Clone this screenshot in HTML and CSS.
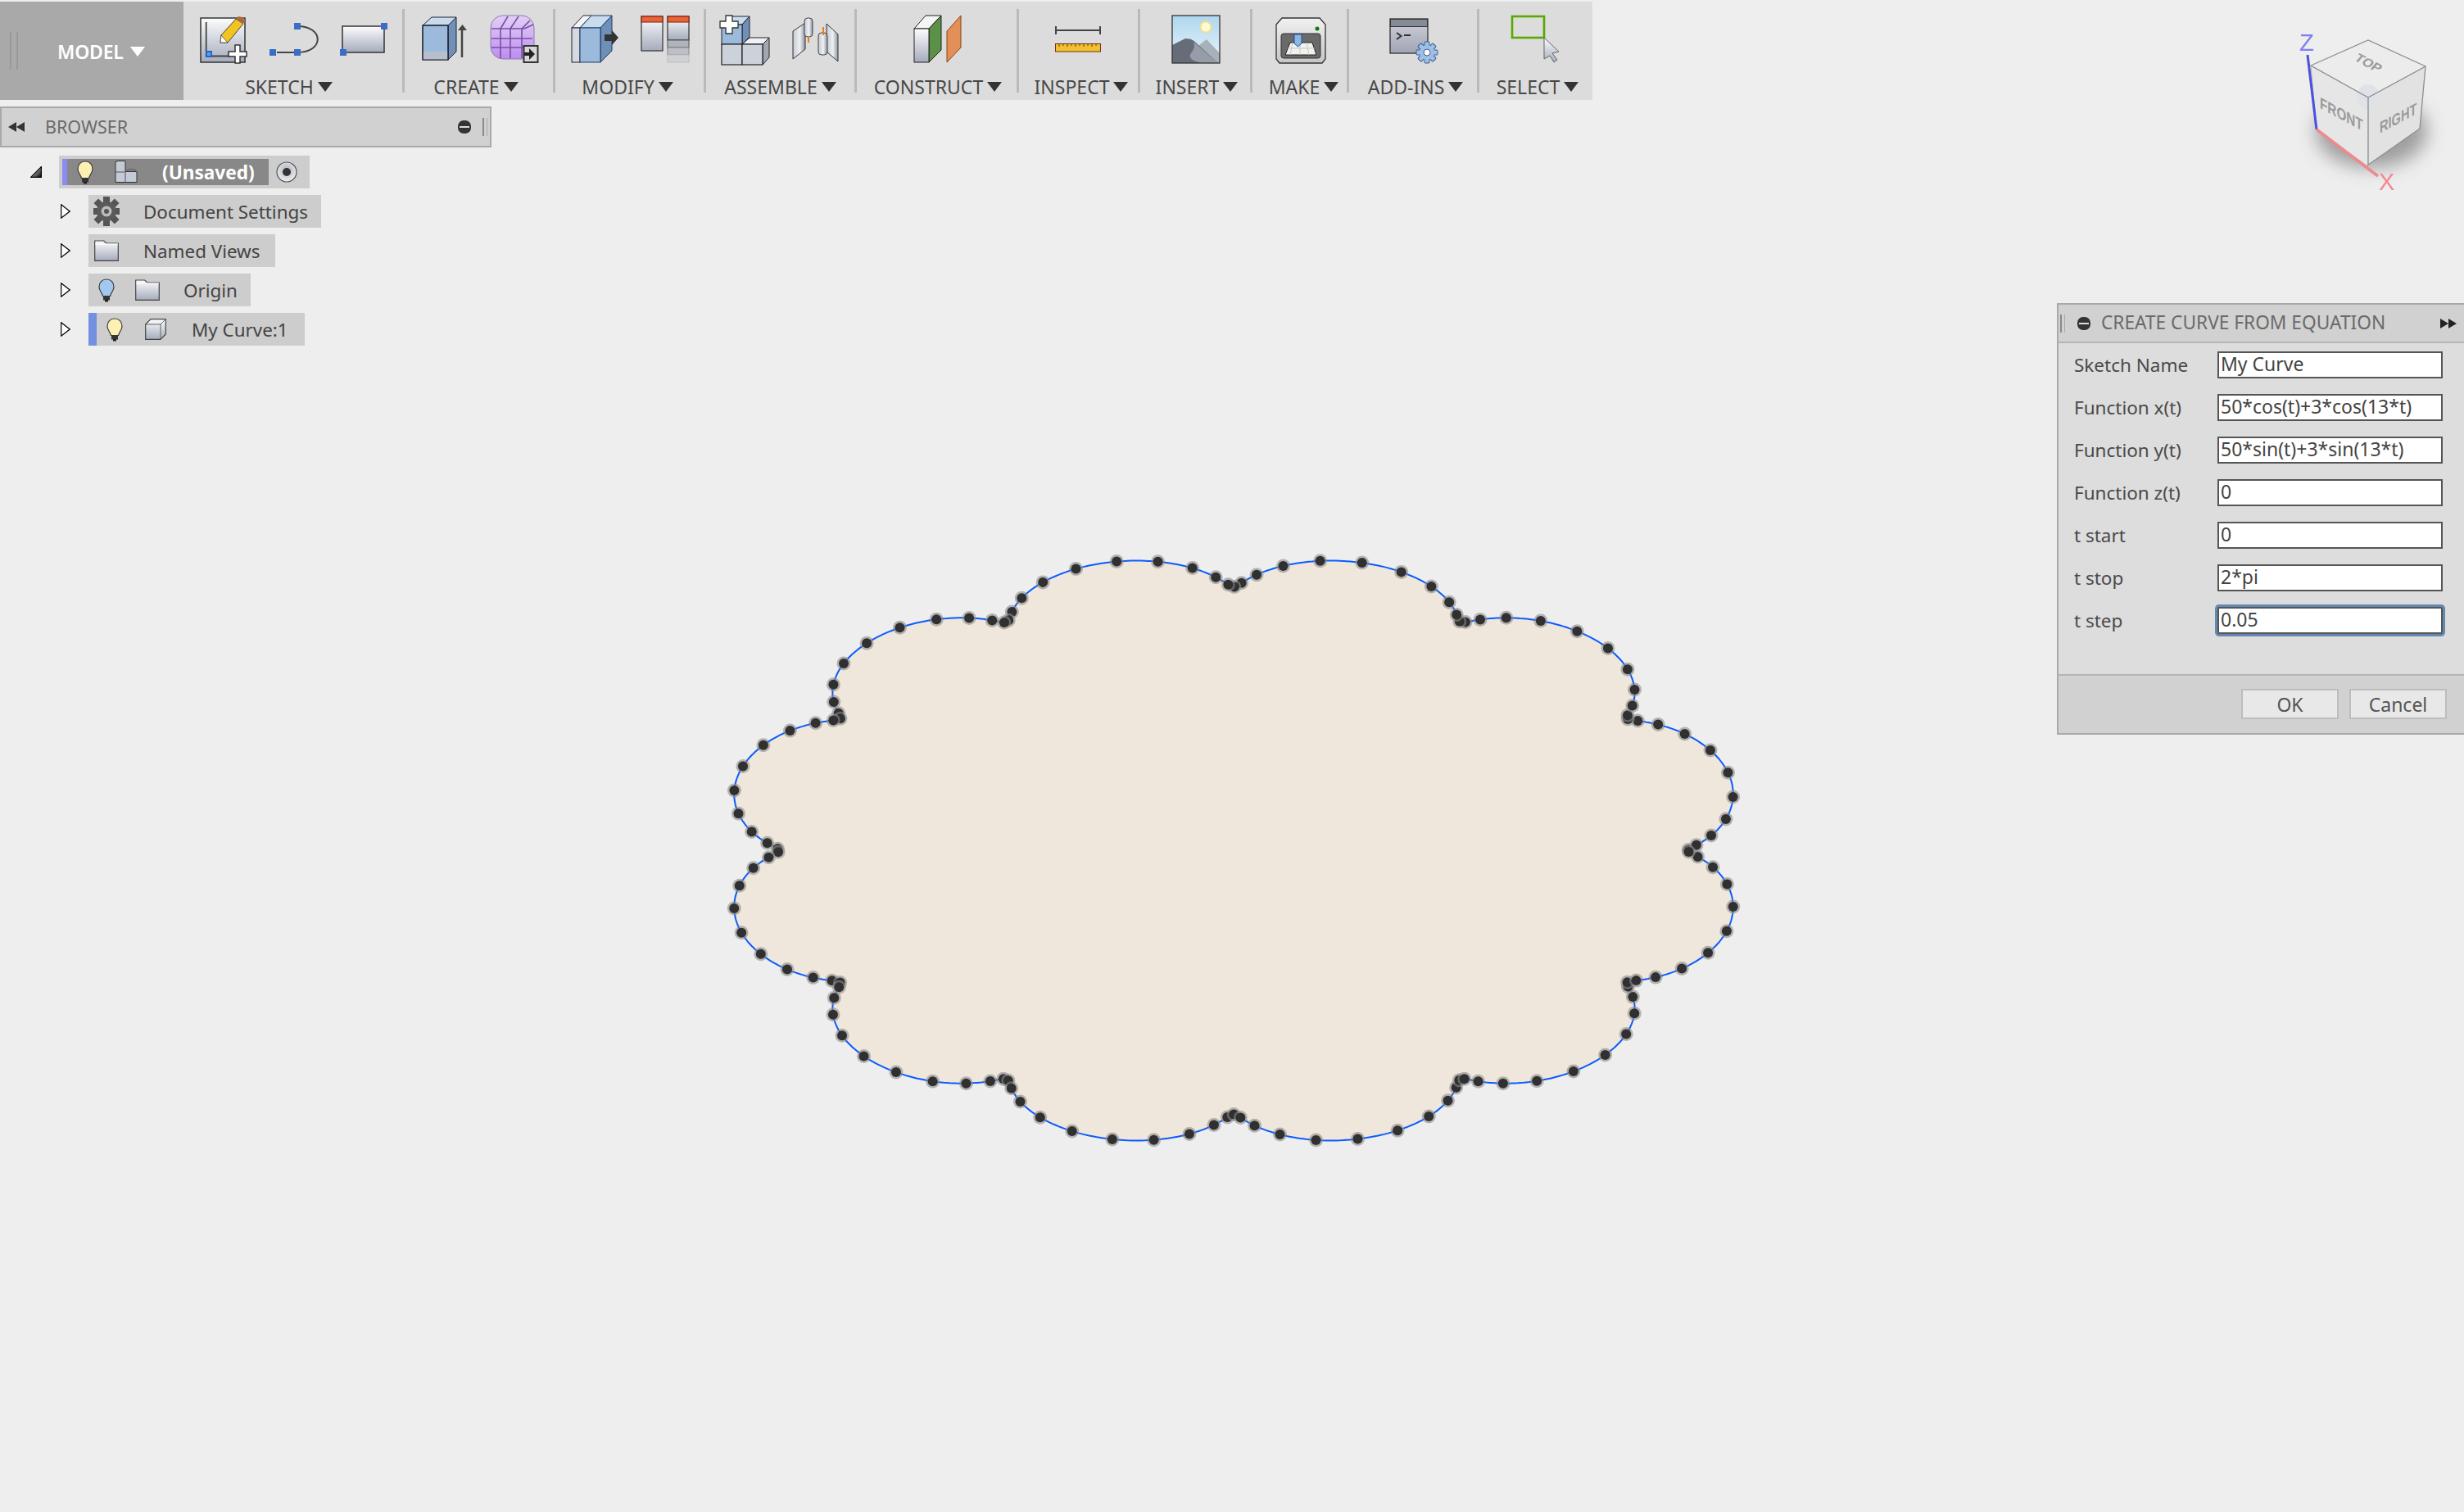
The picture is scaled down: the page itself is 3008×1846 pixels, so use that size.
FILE: index.html
```html
<!DOCTYPE html>
<html lang="en">
<head>
<meta charset="utf-8">
<title>Create Curve From Equation</title>
<link rel="stylesheet" href="styles.css">
</head>
<body>
<svg class="defs" width="0" height="0" aria-hidden="true">
  <defs>
    <linearGradient id="steel" x1="0" y1="0" x2="0" y2="1"><stop offset="0" stop-color="#fdfdfe"/><stop offset="1" stop-color="#a4abbc"/></linearGradient>
    <linearGradient id="steelH" x1="0" y1="0" x2="1" y2="0"><stop offset="0" stop-color="#c4c9d2"/><stop offset=".55" stop-color="#eef0f3"/><stop offset="1" stop-color="#8e95a4"/></linearGradient>
    <linearGradient id="purple" x1="0" y1="0" x2="0" y2="1"><stop offset="0" stop-color="#e2cff6"/><stop offset="1" stop-color="#bd8df0"/></linearGradient>
    <linearGradient id="sky" x1="0" y1="0" x2="0" y2="1"><stop offset="0" stop-color="#aed6ee"/><stop offset="1" stop-color="#eaf5fb"/></linearGradient>
    <linearGradient id="body3d" x1="0" y1="0" x2="0" y2="1"><stop offset="0" stop-color="#f1f1f1"/><stop offset="1" stop-color="#c6c6c6"/></linearGradient>
    <linearGradient id="term" x1="0" y1="0" x2="0" y2="1"><stop offset="0" stop-color="#cfd2dc"/><stop offset="1" stop-color="#a0a4b4"/></linearGradient>
    <linearGradient id="twist" x1="0" y1="0" x2="1" y2="1"><stop offset="0" stop-color="#fff"/><stop offset="1" stop-color="#000"/></linearGradient>
    <radialGradient id="radio" cx=".5" cy=".4" r=".6"><stop offset="0" stop-color="#aeb2bd"/><stop offset="1" stop-color="#eef0f4"/></radialGradient>
    <filter id="soft" x="-50%" y="-50%" width="200%" height="200%"><feGaussianBlur stdDeviation="11"/></filter>
    <symbol id="bulb" viewBox="0 0 20 29">
      <path d="M10 1C4.500 1 1 5 1 10.500c0 4.500 3.500 6.500 4.500 11h9c1-4.500 4.500-6.500 4.500-11C19 5 15.500 1 10 1z" fill="currentColor" stroke="#3a3a3a" stroke-width="1.200"/>
      <rect x="6" y="21.500" width="8" height="5" fill="#333"/><rect x="8" y="26" width="4" height="2.500" fill="#222"/>
    </symbol>
    <symbol id="folder" viewBox="0 0 30 26">
      <path d="M.7 25.300V1h11l3 3h14.600v21.300z" fill="url(#steel)" stroke="#444" stroke-width="1.200"/>
      <path d="M1 5h28" stroke="#fff" stroke-width="1"/>
    </symbol>
  </defs>
</svg>

<svg class="canvas" id="canvas" viewBox="0 0 3008 1846" aria-hidden="true"></svg>

<header class="toolbar">
  <div class="model">
    <span class="grip"></span>
    <span class="model-label">MODEL<i class="caret caret-light"></i></span>
  </div>

  <section class="group group-sketch">
    <svg class="icons" width="267" height="85" viewBox="224 5 267 85">
      <rect x="245" y="22" width="54" height="54" fill="url(#steel)" stroke="#333" stroke-width="1.500"/>
      <path d="M251.700 27v41.500H281" fill="none" stroke="#444" stroke-width="1.800"/>
      <rect x="251" y="62" width="8" height="8" fill="#2e63bd"/><rect x="253" y="64" width="4" height="4" fill="#4fa3ff"/>
      <path d="M270 43l18-20 9 6-19 23h-9z" fill="#f3c320" stroke="#444" stroke-width="1"/>
      <path d="M270 43l8 9h-9z" fill="#fff" stroke="#444" stroke-width=".8"/>
      <path d="M288 23l3-3 5 1 3 5-2 3z" fill="#a9693a"/>
      <path d="M287 55h6v8h8v6h-8v8h-6v-8h-8v-6h8z" fill="#fff" stroke="#333" stroke-width="1.500"/>

      <path d="M338 64h25c33 0 33-32 0-32" fill="none" stroke="#444" stroke-width="2"/>
      <rect x="329" y="60" width="8" height="8" fill="#3a6cc8"/><rect x="359" y="60" width="8" height="8" fill="#3a6cc8"/><rect x="359" y="28" width="8" height="8" fill="#3a6cc8"/>

      <rect x="418" y="32" width="51" height="32" fill="url(#steel)" stroke="#333" stroke-width="1.500"/>
      <rect x="465" y="28" width="8" height="8" fill="#3a6cc8"/><rect x="415" y="60" width="8" height="8" fill="#3a6cc8"/>
    </svg>
    <div class="tool-label">SKETCH<i class="caret"></i></div>
  </section>
  <span class="sep"></span>

  <section class="group group-create">
    <svg class="icons" width="181" height="85" viewBox="494 5 181 85">
      <path d="M516 31l11-10h30l-10 10z" fill="#c8dcee" stroke="#223" stroke-width="1"/>
      <path d="M547 31l10-10v42l-10 10z" fill="#7090b8" stroke="#223" stroke-width="1"/>
      <rect x="516" y="31" width="31" height="42" fill="#9cbadb" stroke="#223" stroke-width="1"/>
      <path d="M516.500 63h30v10h-30z" fill="#b8bfcc"/>
      <path d="M516 73V31h31v42z" fill="none" stroke="#223" stroke-width="1.200"/>
      <path d="M564 70V36" stroke="#444" stroke-width="2.500"/><path d="M559 37l5.500-7 5.500 7z" fill="#444"/>

      <rect x="599" y="19" width="53" height="53" rx="15" fill="url(#purple)" stroke="#8f7ab0" stroke-width="1"/>
      <path d="M600 35h40l11-5M600 47h50M600 58h50M611 35v36M623 35v36M637 35v36M611 35l9-15M623 35l10-15M637 35l10-10" fill="none" stroke="#7a4fa3" stroke-width="1.600"/>
      <rect x="639.500" y="56" width="17" height="20" fill="#d8d8d8" stroke="#333" stroke-width="2"/>
      <path d="M640 64h6v-5l7 7-7 7v-5h-6z" fill="#222"/>
    </svg>
    <div class="tool-label">CREATE<i class="caret"></i></div>
  </section>
  <span class="sep"></span>

  <section class="group group-modify">
    <svg class="icons" width="181" height="85" viewBox="678 5 181 85">
      <path d="M698 34l14-15h10l-14 15z" fill="#f4f5f7" stroke="#223" stroke-width="1"/>
      <rect x="698" y="34" width="10" height="42" fill="#d5d9e0" stroke="#223" stroke-width="1"/>
      <path d="M708 34l14-15h25l-14 15z" fill="#c8dcee" stroke="#1e3a66" stroke-width="1"/>
      <path d="M733 34l14-15v43l-14 14z" fill="#6e8fb8" stroke="#1e3a66" stroke-width="1"/>
      <rect x="708" y="34" width="25" height="42" fill="#9cbadb" stroke="#1e3a66" stroke-width="1"/>
      <path d="M738 42h9v-5l8 9-8 9v-5h-9z" fill="#333"/>

      <rect x="783" y="20" width="26" height="42" fill="url(#steel)" stroke="#333" stroke-width="1.200"/>
      <rect x="783" y="20" width="26" height="7" fill="#ea6236" stroke="#7a1f10" stroke-width="1"/>
      <rect x="815" y="20" width="26" height="29" fill="url(#steel)" stroke="#333" stroke-width="1.200"/>
      <rect x="815" y="20" width="26" height="7" fill="#ea6236" stroke="#7a1f10" stroke-width="1"/>
      <rect x="815" y="49" width="26" height="9" fill="#b0b4bc" stroke="#555" stroke-width="1"/>
      <rect x="815" y="58" width="26" height="9" fill="#bcbfc6" stroke="#888" stroke-width="1"/>
      <rect x="815" y="67" width="26" height="9" fill="#d0d1d4" stroke="#bbb" stroke-width="1"/>
    </svg>
    <div class="tool-label">MODIFY<i class="caret"></i></div>
  </section>
  <span class="sep"></span>

  <section class="group group-assemble">
    <svg class="icons" width="181" height="85" viewBox="862 5 181 85">
      <path d="M890 20h25l-9 10h-25z" fill="#c8dcee" stroke="#223" stroke-width="1"/>
      <path d="M906 30l9-10v25l-9 9z" fill="#7090b8" stroke="#223" stroke-width="1"/>
      <rect x="881" y="30" width="25" height="24" fill="#9cbadb" stroke="#223" stroke-width="1"/>
      <rect x="881" y="54" width="25" height="25" fill="#ccd2da" stroke="#222" stroke-width="1.200"/>
      <path d="M906 54l9-8h24l-8 8z" fill="#f0f1f4" stroke="#222" stroke-width="1"/>
      <path d="M931 54l8-8v24l-8 9z" fill="#a0a8b4" stroke="#222" stroke-width="1"/>
      <rect x="906" y="54" width="25" height="25" fill="#ccd2da" stroke="#222" stroke-width="1.200"/>
      <path d="M886 19h8v7h7v8h-7v7h-8v-7h-7v-8h7z" fill="#fff" stroke="#333" stroke-width="1.300"/>

      <path d="M968 38l15-10v32l-15 12z" fill="url(#steelH)" stroke="#333" stroke-width="1"/>
      <rect x="982" y="22" width="10" height="23" rx="4" fill="url(#steelH)" stroke="#444" stroke-width="1"/>
      <path d="M987 45v7" stroke="#f07a10" stroke-width="2"/>
      <path d="M1009 29l14 13v33l-14-12z" fill="url(#steelH)" stroke="#333" stroke-width="1"/>
      <rect x="999" y="40" width="11" height="27" rx="4" fill="url(#steelH)" stroke="#444" stroke-width="1"/>
      <path d="M1005 33v10" stroke="#f07a10" stroke-width="2"/>
    </svg>
    <div class="tool-label">ASSEMBLE<i class="caret"></i></div>
  </section>
  <span class="sep"></span>

  <section class="group group-construct">
    <svg class="icons" width="195" height="85" viewBox="1046 5 195 85">
      <path d="M1116 35l14-16h19l-15 16z" fill="#f4f5f7" stroke="#222" stroke-width="1"/>
      <path d="M1134 35l15-16v42l-15 15z" fill="#5a9048" stroke="#222" stroke-width="1"/>
      <rect x="1116" y="35" width="18" height="41" fill="url(#steel)" stroke="#222" stroke-width="1"/>
      <path d="M1156 38l17-19v39l-17 18z" fill="#e29058" stroke="#8a4010" stroke-width="1"/>
    </svg>
    <div class="tool-label">CONSTRUCT<i class="caret"></i></div>
  </section>
  <span class="sep"></span>

  <section class="group group-inspect">
    <svg class="icons" width="145" height="85" viewBox="1244 5 145 85">
      <path d="M1289 37h54M1289 32v10M1343 32v10" stroke="#444" stroke-width="2" fill="none"/>
      <rect x="1288.500" y="53.500" width="55" height="9.500" fill="#f0c030" stroke="#7a3010" stroke-width="1"/>
      <path d="M1293 54v3M1298 54v2M1303 54v3M1308 54v2M1313 54v3M1318 54v2M1323 54v3M1328 54v2M1333 54v3M1338 54v2" stroke="#7a3010" stroke-width="1"/>
    </svg>
    <div class="tool-label">INSPECT<i class="caret"></i></div>
  </section>
  <span class="sep"></span>

  <section class="group group-insert">
    <svg class="icons" width="134" height="85" viewBox="1392 5 134 85">
      <rect x="1431" y="19" width="58" height="58" fill="url(#sky)"/>
      <circle cx="1472" cy="33" r="6.500" fill="#fffbd8" stroke="#efe08e" stroke-width="2"/>
      <path d="M1464 55l9-7 16 17v12h-16z" fill="#a8b0ba"/>
      <path d="M1431 55l16-8c8 0 11 3 14 6l26 24h-56z" fill="#666c78"/>
      <path d="M1457 51l30 26h-20c-6-2-12-3-14-7-2-6 8-8 4-19z" fill="#969ca8"/>
      <rect x="1431" y="19" width="58" height="58" fill="none" stroke="#333" stroke-width="1.300"/>
    </svg>
    <div class="tool-label">INSERT<i class="caret"></i></div>
  </section>
  <span class="sep"></span>

  <section class="group group-make">
    <svg class="icons" width="115" height="85" viewBox="1529 5 115 85">
      <path d="M1565 22h46l7 8v42l-4 5h-52l-4-5V30z" fill="url(#body3d)" stroke="#333" stroke-width="1.300"/>
      <circle cx="1608" cy="35" r="2.500" fill="#0a7a10"/>
      <rect x="1564" y="41" width="48" height="30" rx="3" fill="#6a6a6a" stroke="#333" stroke-width="1"/>
      <path d="M1575 52h27l5 15h-38z" fill="#f1f1ee" stroke="#222" stroke-width="1"/>
      <path d="M1572 59h33M1578 52l-3 15M1587 52v15M1595 52l3 15" stroke="#c8c8c8" stroke-width="1"/>
      <path d="M1580 42h9v11l-4.500 4-4.500-4z" fill="#8ab8e0" stroke="#1a50a0" stroke-width="1"/>
    </svg>
    <div class="tool-label">MAKE<i class="caret"></i></div>
  </section>
  <span class="sep"></span>

  <section class="group group-addins">
    <svg class="icons" width="156" height="85" viewBox="1647 5 156 85">
      <rect x="1697" y="23" width="46" height="42" fill="url(#term)" stroke="#333" stroke-width="1.300"/>
      <rect x="1697.500" y="23.500" width="45" height="9" fill="#868b98" stroke="#333" stroke-width="1"/>
      <path d="M1705 40l5.500 4-5.500 4M1714 43h8" fill="none" stroke="#333" stroke-width="2"/>
      <g fill="#9fc0e6" stroke="#3a5a90" stroke-width="1">
        <rect x="1739" y="51" width="6" height="26" rx="1"/>
        <rect x="1729" y="61" width="26" height="6" rx="1"/>
        <rect x="1739" y="51" width="6" height="26" rx="1" transform="rotate(45 1742 64)"/>
        <rect x="1739" y="51" width="6" height="26" rx="1" transform="rotate(-45 1742 64)"/>
      </g>
      <circle cx="1742" cy="64" r="9" fill="#9fc0e6"/>
      <circle cx="1742" cy="64" r="4" fill="#fff" stroke="#3a5a90" stroke-width="1"/>
    </svg>
    <div class="tool-label">ADD-INS<i class="caret"></i></div>
  </section>
  <span class="sep"></span>

  <section class="group group-select">
    <svg class="icons" width="138" height="85" viewBox="1806 5 138 85">
      <rect x="1846" y="20" width="39" height="26" fill="none" stroke="#5aa800" stroke-width="2.600"/>
      <path d="M1885 46l18 17-8 2 6 8-4 3-5-8-7 4z" fill="url(#steel)" stroke="#666" stroke-width="1"/>
    </svg>
    <div class="tool-label">SELECT<i class="caret"></i></div>
  </section>
</header>

<aside class="browser">
  <div class="browser-head">
    <svg class="head-arrows" width="20" height="14" viewBox="0 0 20 14"><path d="M10 1L0 7l10 6zM20 1L10 7l10 6z" fill="#333"/></svg>
    <span class="browser-title">BROWSER</span>
    <span class="pill"></span>
    <span class="mini-grip"></span>
  </div>

  <ul class="tree">
    <li class="row row-root">
      <svg class="toggle-open" width="14" height="14" viewBox="0 0 14 14"><path d="M13.400.6v12.800H.6z" fill="url(#twist)" stroke="#000" stroke-width="1.200"/></svg>
      <div class="item item-root">
        <div class="root-inner">
          <i class="bar bar-violet"></i>
          <svg class="bulb bulb-yellow bulb-root"><use href="#bulb"/></svg>
          <svg class="comp" width="28" height="28" viewBox="0 0 28 28">
            <path d="M1 1.500l3-1h9v13h14v13H1z" fill="#c4cad6" stroke="#333" stroke-width="1"/>
            <path d="M1 14h12M13 14v13M13 14l3-3h9l2 3" fill="none" stroke="#555" stroke-width="1"/>
          </svg>
          <span class="root-name">(Unsaved)</span>
        </div>
        <svg class="radio" width="26" height="26" viewBox="0 0 26 26"><circle cx="13" cy="13" r="12" fill="url(#radio)" stroke="#555" stroke-width="1.200"/><circle cx="13" cy="13" r="5" fill="#333"/></svg>
      </div>
    </li>
    <li class="row">
      <svg class="toggle" width="12" height="18" viewBox="0 0 12 18"><path d="M.7.8l10.500 8.200L.7 17.200z" fill="#fff" stroke="#000" stroke-width="1.200"/></svg>
      <div class="item item-doc">
        <svg class="gear" width="32" height="36" viewBox="0 0 32 36">
          <g fill="#555"><rect x="12" y="0" width="8" height="36"/><rect x="0" y="14" width="32" height="8"/><rect x="12" y="0" width="8" height="36" transform="rotate(45 16 18)"/><rect x="12" y="0" width="8" height="36" transform="rotate(-45 16 18)"/></g>
          <circle cx="16" cy="18" r="12" fill="#5a5a5a"/><circle cx="16" cy="18" r="6.500" fill="#bbb"/><circle cx="16" cy="18" r="3" fill="#555"/>
        </svg>
        <span class="item-text">Document Settings</span>
      </div>
    </li>
    <li class="row">
      <svg class="toggle" width="12" height="18" viewBox="0 0 12 18"><path d="M.7.8l10.500 8.200L.7 17.200z" fill="#fff" stroke="#000" stroke-width="1.200"/></svg>
      <div class="item item-views">
        <svg class="folder"><use href="#folder"/></svg>
        <span class="item-text">Named Views</span>
      </div>
    </li>
    <li class="row">
      <svg class="toggle" width="12" height="18" viewBox="0 0 12 18"><path d="M.7.8l10.500 8.200L.7 17.200z" fill="#fff" stroke="#000" stroke-width="1.200"/></svg>
      <div class="item item-origin">
        <svg class="bulb bulb-blue"><use href="#bulb"/></svg>
        <svg class="folder"><use href="#folder"/></svg>
        <span class="item-text">Origin</span>
      </div>
    </li>
    <li class="row">
      <svg class="toggle" width="12" height="18" viewBox="0 0 12 18"><path d="M.7.8l10.500 8.200L.7 17.200z" fill="#fff" stroke="#000" stroke-width="1.200"/></svg>
      <div class="item item-curve">
        <i class="bar bar-blue"></i>
        <svg class="bulb bulb-yellow"><use href="#bulb"/></svg>
        <svg class="box" width="26" height="26" viewBox="0 0 26 26">
          <path d="M.7 7L7 .7h18.300V19L19 25.300H.7z" fill="url(#steel)" stroke="#444" stroke-width="1.200"/>
          <path d="M.7 7H19v18.300M19 7l6.300-6.300" fill="none" stroke="#666" stroke-width="1"/>
        </svg>
        <span class="item-text">My Curve:1</span>
      </div>
    </li>
  </ul>
</aside>

<svg class="viewcube" width="228" height="230" viewBox="2780 20 228 230">
  <ellipse cx="2895" cy="160" rx="68" ry="45" fill="#8a8a8a" opacity=".8" filter="url(#soft)"/>
  <path d="M2891 49l70 32-7 76-64 45-63-44-6-78z" fill="#ececec"/>
  <path d="M2821 80l70 39v83l-63-44z" fill="#e6e6e6"/>
  <path d="M2891 119l70-38-7 76-64 45z" fill="#e2e2e2"/>
  <ellipse cx="2891" cy="118" rx="14" ry="15" fill="#dfe2e6"/>
  <path d="M2821 80l70-31 70 32-70 38zM2891 119v83M2961 81l-7 76-64 45" fill="none" stroke="#8d8d8d" stroke-width="1.300"/>
  <path d="M2821 80l7 78" fill="none" stroke="#b5b5b5" stroke-width="1"/>
  <text class="cube-text" transform="matrix(.86 .46 -.6 .7 2873 73)">TOP</text>
  <text class="cube-text" transform="matrix(.9 .48 0 1.150 2832 132)">FRONT</text>
  <text class="cube-text" transform="matrix(.86 -.46 0 1.150 2905 163)">RIGHT</text>
  <path d="M2817 67l11 91" stroke="#4a50e0" stroke-width="3" fill="none"/>
  <path d="M2828 158l75 57" stroke="#ee8a8a" stroke-width="3.500" fill="none"/>
  <text class="axis axis-z" x="2807" y="62">Z</text>
  <text class="axis axis-x" x="2904" y="232">X</text>
</svg>

<section class="dialog">
  <div class="dialog-head">
    <span class="mini-grip mini-grip-left"></span>
    <span class="pill"></span>
    <span class="dialog-title">CREATE CURVE FROM EQUATION</span>
    <svg class="head-arrows-right" width="20" height="14" viewBox="0 0 20 14"><path d="M0 1l10 6-10 6zM10 1l10 6-10 6z" fill="#222"/></svg>
  </div>
  <div class="form">
    <span class="field-label">Sketch Name</span><div class="field">My Curve</div>
    <span class="field-label">Function x(t)</span><div class="field">50*cos(t)+3*cos(13*t)</div>
    <span class="field-label">Function y(t)</span><div class="field">50*sin(t)+3*sin(13*t)</div>
    <span class="field-label">Function z(t)</span><div class="field">0</div>
    <span class="field-label">t start</span><div class="field">0</div>
    <span class="field-label">t stop</span><div class="field">2*pi</div>
    <span class="field-label">t step</span><div class="field field-focus">0.05</div>
  </div>
  <div class="dialog-foot">
    <button class="btn" type="button">OK</button>
    <button class="btn" type="button">Cancel</button>
  </div>
</section>
<script src="curve.js"></script>
</body>
</html>
```
FILE: styles.css
```css
* { box-sizing: border-box; }
html, body { margin: 0; padding: 0; }
body {
  width: 3008px;
  height: 1846px;
  position: relative;
  overflow: hidden;
  background: #eeeeee;
  color: #444;
  font-family: "Noto Sans", "Open Sans", sans-serif;
  font-size: 23px;
}
.defs { position: absolute; }
.canvas { position: absolute; left: 0; top: 0; width: 3008px; height: 1846px; }
.viewcube { position: absolute; left: 2780px; top: 20px; }
.cube-text { font: 700 17px "Liberation Sans", sans-serif; fill: #9a9a9a; }
.axis { font: 400 29px "Liberation Sans", sans-serif; }
.axis-z { fill: #7f7ff2; }
.axis-x { fill: #f4898f; }

/* toolbar */
.toolbar {
  position: relative;
  display: flex;
  width: 1944px;
  height: 120px;
  margin-top: 2px;
  background: #dcdcdc;
}
.model {
  display: flex;
  align-items: center;
  width: 224px;
  background: #a9a9a9;
  padding-left: 12px;
}
.grip {
  width: 10px;
  height: 46px;
  border-left: 2px solid #999;
  border-right: 2px solid #999;
}
.model-label {
  display: flex;
  align-items: center;
  margin: 2px 0 0 48px;
  color: #fff;
  font-size: 23px;
  font-weight: 600;
  letter-spacing: -.2px;
}
.group { display: flex; flex-direction: column; padding-top: 3px; }
.group-sketch { width: 267px; }
.group-create, .group-modify, .group-assemble { width: 181px; }
.group-construct { width: 195px; }
.group-inspect { width: 145px; }
.group-insert { width: 134px; }
.group-make { width: 115px; }
.group-addins { width: 156px; }
.group-select { width: 138px; }
.icons { display: block; overflow: visible; flex: none; }
.sep { flex: none; width: 3px; height: 102px; margin-top: 9px; background: #bababa; }
.tool-label {
  display: flex;
  align-items: center;
  justify-content: center;
  height: 32px;
  color: #484848;
  font-size: 23px;
  white-space: nowrap;
}
.group-sketch .tool-label { padding-right: 10px; }
.group-create .tool-label { padding-right: 7px; }
.group-modify .tool-label { padding-right: 5px; }
.group-construct .tool-label { padding-left: 3px; }
.group-inspect .tool-label { padding-left: 7px; }
.group-insert .tool-label { padding-left: 4px; }
.group-make .tool-label { padding-left: 10px; }
.group-addins .tool-label { padding-left: 6px; }
.group-select .tool-label { padding-left: 4px; }
.caret {
  display: inline-block;
  margin-left: 5px;
  border-style: solid;
  border-width: 12px 9px 0 9px;
  border-color: #333 transparent transparent transparent;
}
.caret-light { border-color: #fff transparent transparent transparent; margin-left: 8px; }

/* browser */
.browser { position: relative; width: 600px; margin-top: 8px; }
.browser-head {
  display: flex;
  align-items: center;
  height: 50px;
  padding-left: 8px;
  background: #d1d1d1;
  border: 2px solid #a9a9a9;
}
.head-arrows { flex: none; }
.browser-title { margin: -2px 0 0 25px; color: #6a6a6a; font-size: 21.500px; flex: 1; }
.pill {
  flex: none;
  position: relative;
  width: 16px;
  height: 16px;
  border-radius: 7px;
  background: #333;
}
.pill::after {
  content: "";
  position: absolute;
  left: 2px;
  right: 2px;
  top: 7px;
  height: 2px;
  background: #ddd;
}
.mini-grip {
  flex: none;
  width: 6px;
  height: 22px;
  margin: 0 3px 0 14px;
  border-left: 2px solid #888;
  border-right: 1px solid #aaa;
}
.tree { list-style: none; margin: 10px 0 0; padding: 0; display: flex; flex-direction: column; gap: 8px; }
.row { display: flex; align-items: center; height: 40px; padding-left: 74px; }
.row-root { padding-left: 37px; }
.toggle, .toggle-open { flex: none; }
.toggle { margin-right: 22px; }
.toggle-open { margin-right: 21px; }
.item { display: flex; align-items: center; height: 40px; background: #cdcdcd; }
.item-root { width: 306px; padding: 4px 0 4px 4px; }
.root-inner {
  display: flex;
  align-items: center;
  width: 252px;
  height: 32px;
  background: #888;
}
.bar { display: block; flex: none; }
.bar-violet { width: 6px; height: 32px; background: #8a8cf2; }
.bar-blue { width: 10px; height: 40px; background: #7391e0; }
.bulb { flex: none; width: 20px; height: 29px; }
.bulb-yellow { color: #fdf0b4; }
.bulb-blue { color: #a3c8ee; }
.bulb-root { margin-left: 12px; }
.comp { flex: none; margin-left: 26px; }
.root-name { margin-left: 30px; color: #fff; font-weight: 700; font-size: 22.600px; white-space: nowrap; }
.radio { flex: none; margin-left: 9px; }
.item-text { white-space: nowrap; color: #444; font-size: 22.400px; }
.folder { flex: none; width: 30px; height: 26px; }
.item-doc { width: 284px; padding-left: 6px; }
.item-doc .item-text { margin-left: 29px; }
.item-views { width: 228px; padding-left: 7px; }
.item-views .item-text { margin-left: 30px; }
.item-origin { width: 198px; padding-left: 12px; }
.item-origin .folder { margin-left: 25px; }
.item-origin .item-text { margin-left: 29px; }
.item-curve { width: 264px; }
.item-curve .bulb { margin-left: 12px; }
.box { flex: none; margin-left: 27px; }
.item-curve .item-text { margin-left: 31px; }

/* dialog */
.dialog {
  position: absolute;
  left: 2511px;
  top: 370px;
  width: 497px;
  height: 527px;
  display: flex;
  flex-direction: column;
  background: #dddddd;
  border-left: 2px solid #a9a9a9;
  border-top: 2px solid #a9a9a9;
  border-bottom: 2px solid #a9a9a9;
}
.dialog-head {
  display: flex;
  align-items: center;
  height: 47px;
  background: #d1d1d1;
  border-bottom: 2px solid #b5b5b5;
  flex: none;
}
.mini-grip-left { margin: 0 0 0 2px; }
.dialog-head .pill { margin-left: 15px; }
.dialog-title { margin: -3px 0 0 13px; color: #6a6a6a; font-size: 22.700px; white-space: nowrap; flex: 1; }
.head-arrows-right { flex: none; margin-right: 9px; }
.form {
  flex: 1;
  display: grid;
  grid-template-columns: 175px 275px;
  grid-auto-rows: 33px;
  row-gap: 19px;
  padding: 10px 0 0 19px;
  align-items: center;
  align-content: start;
}
.field-label { white-space: nowrap; color: #4a4a4a; font-size: 22.500px; }
.field {
  height: 33px;
  line-height: 27px;
  padding-left: 2px;
  background: #fff;
  border: 2px solid #555;
  color: #444;
  font-size: 23px;
  white-space: nowrap;
}
.field-focus { box-shadow: 0 0 0 3px #6488b0; border-radius: 2px; }
.dialog-foot {
  flex: none;
  display: flex;
  justify-content: flex-end;
  gap: 13px;
  height: 72px;
  padding: 16px 21px 0 0;
  background: #d1d1d1;
  border-top: 2px solid #b5b5b5;
}
.btn {
  width: 119px;
  height: 37px;
  padding: 0;
  background: #e8e8e8;
  border: 2px solid #bdbdbd;
  border-radius: 0;
  color: #555;
  font: 400 23px "Noto Sans", sans-serif;
}
```
FILE: curve.js
```js
(function () {
  var NS = "http://www.w3.org/2000/svg";
  var svg = document.getElementById("canvas");
  var cx = 1506, cy = 1038.5, sx = 11.8, sy = 6.85, step = 0.05, phase = 0.014;
  function x(t) { return cx + sx * (50 * Math.cos(t) - 3 * Math.cos(13 * t)); }
  function y(t) { return cy - sy * (50 * Math.sin(t) - 3 * Math.sin(13 * t)); }
  var fine = [];
  for (var i = 0; i <= 1500; i++) {
    var u = (i / 1500) * Math.PI * 2;
    fine.push(x(u).toFixed(1) + "," + y(u).toFixed(1));
  }
  function el(name, attrs) {
    var e = document.createElementNS(NS, name);
    for (var k in attrs) e.setAttribute(k, attrs[k]);
    svg.appendChild(e);
  }
  el("polygon", { points: fine.join(" "), fill: "#efe7dc", stroke: "#0a5cff", "stroke-width": "2" });
  for (var t = phase; t <= Math.PI * 2 + 1e-9; t += step) {
    el("circle", { cx: x(t), cy: y(t), r: 8.5, fill: "#8a8a8a", opacity: ".6" });
    el("circle", { cx: x(t), cy: y(t), r: 6, fill: "#303030" });
  }
})();
```
